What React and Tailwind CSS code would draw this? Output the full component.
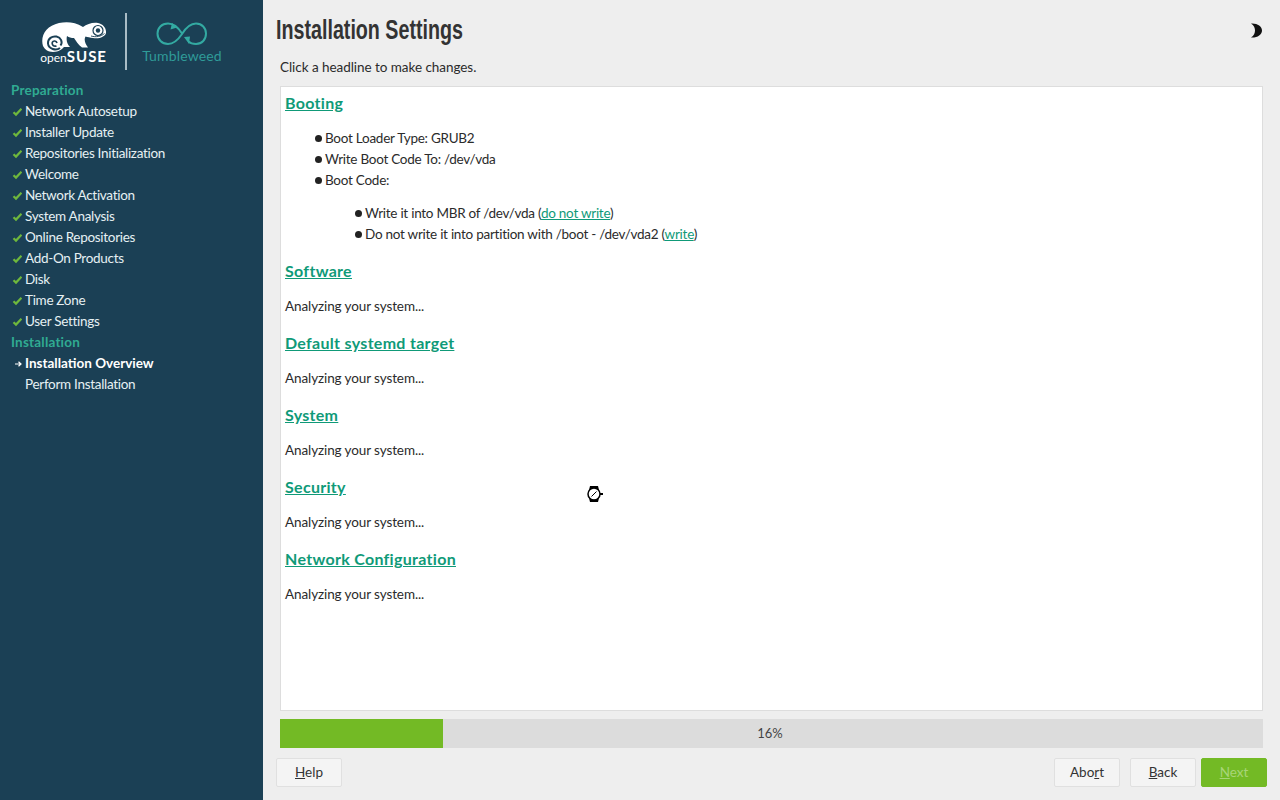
import React from "react";

const preparation = [
  "Network Autosetup",
  "Installer Update",
  "Repositories Initialization",
  "Welcome",
  "Network Activation",
  "System Analysis",
  "Online Repositories",
  "Add-On Products",
  "Disk",
  "Time Zone",
  "User Settings",
];

const Check = () => (
  <svg width="11" height="10" viewBox="0 0 11 10" className="shrink-0">
    <path d="M2.5 5.2 L5 7.6 L10.5 1.8" fill="none" stroke="#6fb83c" strokeWidth="2.2" />
  </svg>
);

const Arrow = () => (
  <svg width="11" height="10" viewBox="0 0 11 10" className="shrink-0">
    <path d="M4 5 H10 M7.5 2.8 L10 5 L7.5 7.2" fill="none" stroke="#ffffff" strokeWidth="1.2" />
  </svg>
);

const StepRow = ({ icon, bold, children }) => (
  <div className={`flex items-center h-[21px] pl-[11px] text-[13.5px] ${bold ? "font-bold text-white" : "tracking-[-0.3px] text-[#e6f0f3]"}`}>
    <span className="w-[11px] mr-[3px] flex">{icon}</span>
    {children}
  </div>
);

const Logo = () => (
  <div className="flex h-[80px] items-start">
    <div className="w-[125px] flex flex-col items-end pt-[21px] pr-[18px]">
      <svg width="66" height="31" viewBox="42 21 66 31" className="shrink-0">
        <path
          d="M44 46 C41 36 47 26 60 23 C68 21.5 76 22 84 27 C88 24 94 22 99 23 C104 24 107.5 28 107 33 C106 37 100 39 94 38 C91 37.8 88.5 37 86.5 36.5 C85 39 85.5 43 89 47.5 L83 47.5 C79 44.5 77 41 75 38 C72 38 70 37.5 68 36 C67 40 68 44 71 47 L65 47 C63 49 60 52 54 52 C49 52 45.5 49 44 46 Z"
          fill="#ffffff"
        />
        <circle cx="99" cy="30.5" r="5" fill="none" stroke="#1b4055" strokeWidth="1.2" />
        <circle cx="99" cy="30.5" r="2.2" fill="#1b4055" />
        <path d="M92 36 C97 37.5 102 36.5 105.5 33.5" fill="none" stroke="#1b4055" strokeWidth="0.9" />
        <path
          d="M61 48 C57 51 49.5 49 49 43.5 C48.8 38.5 53 35.8 57.5 36.6 C62 37.5 64 42 61.5 45.5"
          fill="none"
          stroke="#1b4055"
          strokeWidth="2"
        />
        <path d="M57.5 46 C54.5 46.8 52.6 44.6 53.3 42.4 C54.2 40.4 57.4 40.5 58 43" fill="none" stroke="#1b4055" strokeWidth="1.7" />
      </svg>
      <div className="flex items-baseline leading-none mt-[-3px] text-white">
        <span className="text-[12px] font-normal">open</span>
        <span className="text-[15px] font-bold tracking-[1px]">SUSE</span>
      </div>
    </div>
    <div className="w-[2px] h-[57px] mt-[13px] bg-[#a9bcc5]" />
    <div className="flex flex-col items-center w-[110px] pt-[22px]">
      <svg width="52" height="24" viewBox="157 22 52 24" className="shrink-0">
        <path
          d="M183 33.5 C179 27 175 23.5 169 23.5 C162.5 23.5 158.5 28 158.5 33.5 C158.5 39.5 163 44 169 44 C175 44 179 40 183 34 C187 27.5 191 23.5 197 23.5 C203 23.5 207 28 207 33.5 C207 39.5 203 44 197 44 C193.5 44 191 43 189.5 41.5"
          fill="none"
          stroke="#33aaa2"
          strokeWidth="2"
        />
        <path d="M173 23 L178 27.5 L171.5 29.5 Z M185 37 L191 36.5 L190 44 Z" fill="#33aaa2" />
      </svg>
      <span className="text-[14px] leading-[20px] tracking-[0.16px] text-[#2f9b98]">Tumbleweed</span>
    </div>
  </div>
);

const Sidebar = () => (
  <aside className="w-[263px] shrink-0 bg-[#1b4055]">
    <Logo />
    <div className="h-[21px] pl-[11px] text-[13.5px] font-bold leading-[21px] tracking-[0.2px] text-[#30ab92]">Preparation</div>
    {preparation.map((step) => (
      <StepRow key={step} icon={<Check />}>{step}</StepRow>
    ))}
    <div className="h-[21px] pl-[11px] text-[13.5px] font-bold leading-[21px] tracking-[0.2px] text-[#30ab92]">Installation</div>
    <StepRow icon={<Arrow />} bold>Installation Overview</StepRow>
    <StepRow>Perform Installation</StepRow>
  </aside>
);

const SectionLink = ({ children }) => (
  <h3 className="text-[16px] font-bold leading-[22px] tracking-[0.3px] underline text-[#0f9a78] mt-[15px] first:mt-0">{children}</h3>
);

const Li = ({ children }) => (
  <div className="flex items-center h-[21px] tracking-[-0.26px]">
    <span className="w-[7px] h-[7px] rounded-full bg-[#222] mr-[3px]" />
    <span>{children}</span>
  </div>
);

const Analyzing = () => <p className="mt-[14px] leading-[21px] tracking-[-0.1px]">Analyzing your system...</p>;

const Btn = ({ children, className = "" }) => (
  <button className={`w-[66px] h-[29px] text-[13.5px] rounded-[2px] border border-[#e0e0e0] bg-[#f4f4f4] text-[#333] ${className}`}>
    {children}
  </button>
);

export default function App() {
  return (
    <div className="relative flex w-[1280px] h-[800px] overflow-hidden bg-[#eeeeee] font-['Lato',sans-serif] text-[#2b2b2b]">
      <Sidebar />
      <main className="flex-1 flex flex-col pl-[13px] pr-[13px]">
        <div className="flex items-center justify-between h-[60px]">
          <h1 className="text-[28px] font-bold text-[#333] origin-left scale-x-[0.703] font-['Liberation_Sans',sans-serif]">Installation Settings</h1>
          <svg width="12" height="15" viewBox="0 0 12 15" className="mr-[5px]">
            <path d="M1 0.5 C7 0 12 3 12 7.5 C12 12 7 15 1 14.5 C4 12.5 5 10 5 7.5 C5 5 4 2.5 1 0.5 Z" fill="#111" />
          </svg>
        </div>
        <p className="pl-[4px] h-[26px] text-[13.5px] tracking-[-0.05px] leading-[14px]">Click a headline to make changes.</p>
        <div className="ml-[4px] mr-[4px] h-[625px] bg-white border border-[#dddddd] px-[4px] pt-[5px] text-[13.5px]">
          <SectionLink>Booting</SectionLink>
          <div className="mt-[14px] pl-[30px]">
            <Li>Boot Loader Type: GRUB2</Li>
            <Li>Write Boot Code To: /dev/vda</Li>
            <Li>Boot Code:</Li>
            <div className="mt-[12px] pl-[40px]">
              <Li>
                Write it into MBR of /dev/vda (<a className="underline text-[#0f9a78]">do not write</a>)
              </Li>
              <Li>
                Do not write it into partition with /boot - /dev/vda2 (<a className="underline text-[#0f9a78]">write</a>)
              </Li>
            </div>
          </div>
          <SectionLink>Software</SectionLink>
          <Analyzing />
          <SectionLink>Default systemd target</SectionLink>
          <Analyzing />
          <SectionLink>System</SectionLink>
          <Analyzing />
          <SectionLink>Security</SectionLink>
          <Analyzing />
          <SectionLink>Network Configuration</SectionLink>
          <Analyzing />
        </div>
        <div className="relative ml-[4px] mr-[4px] mt-[8px] h-[29px] bg-[#dcdcdc]">
          <div className="h-full w-[163px] bg-[#73ba25]" />
          <span className="absolute inset-0 flex items-center justify-center pr-[3px] text-[13px] text-[#444]">16%</span>
        </div>
        <div className="flex mt-[10px]">
          <Btn><u>H</u>elp</Btn>
          <div className="flex-1" />
          <Btn>Abo<u>r</u>t</Btn>
          <Btn className="ml-[10px]"><u>B</u>ack</Btn>
          <Btn className="ml-[5px] !bg-[#73ba25] !border-[#73ba25] !text-[#a8d578]"><u>N</u>ext</Btn>
        </div>
      </main>
      {/* busy cursor */}
      <svg width="18" height="16" viewBox="0 0 18 16" className="absolute left-[586px] top-[486px]">
        <path d="M4 0 H12 L13 4 V12 L12 16 H4 L3 12 V4 Z" fill="#000" />
        <circle cx="8" cy="8" r="6" fill="#fff" stroke="#000" strokeWidth="1.5" />
        <path d="M8 8 L10.5 5.5 M8 8 L5.5 10.5" stroke="#000" strokeWidth="1" />
        <rect x="14" y="7" width="3" height="2" fill="#000" />
      </svg>
    </div>
  );
}
